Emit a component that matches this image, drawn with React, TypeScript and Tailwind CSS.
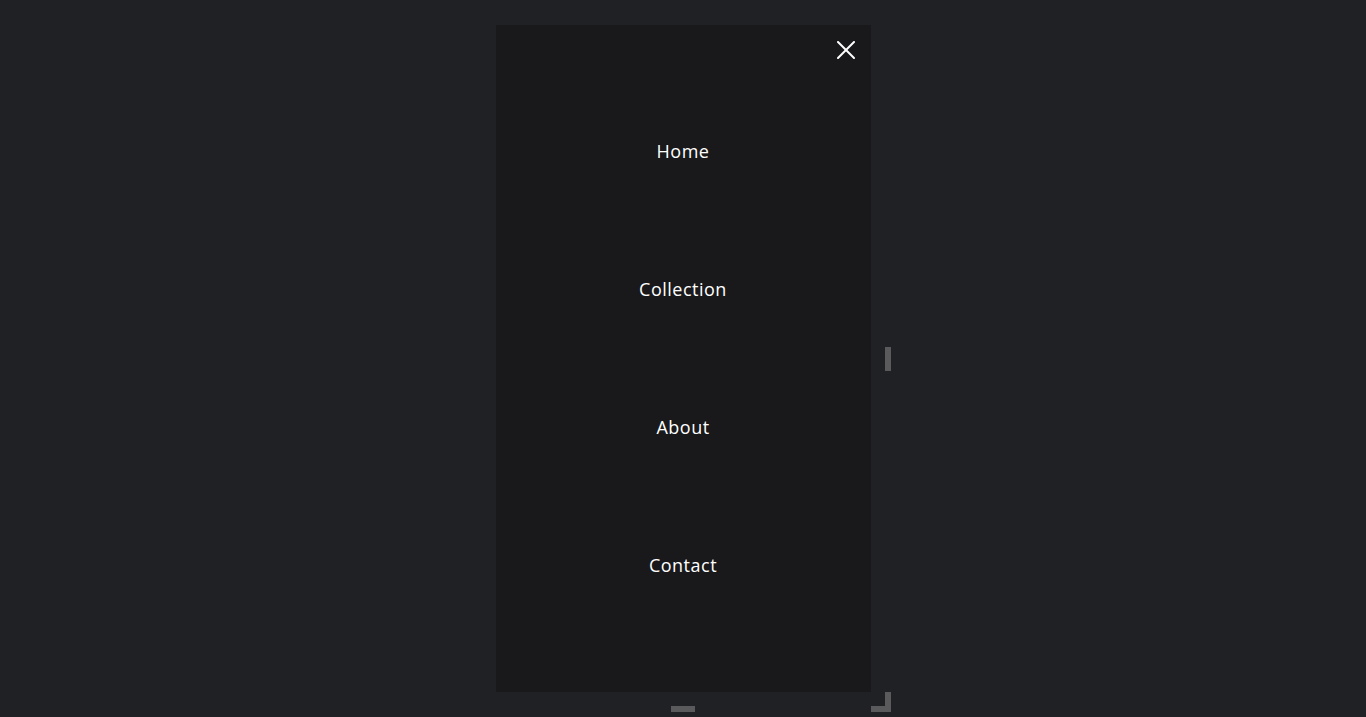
const links = ['Home', 'Collection', 'About', 'Contact'];

export default function App() {
  return (
    <div className="w-full h-[717px] bg-[#202125] overflow-hidden flex justify-center pt-[25px] font-['Open_Sans',sans-serif]">
      <div className="relative w-[375px] h-[667px]">
        <div className="w-full h-full bg-[#19191b] flex flex-col">
          {/* close */}
          <div className="flex justify-end pt-[16px] pr-[16px]">
            <button className="w-[18px] h-[18px] flex items-center justify-center text-white">
              <svg width="18" height="18" viewBox="0 0 18 18" fill="none" stroke="currentColor" strokeWidth="2" strokeLinecap="round">
                <line x1="1" y1="1" x2="17" y2="17" />
                <line x1="17" y1="1" x2="1" y2="17" />
              </svg>
            </button>
          </div>
          <nav className="flex flex-col pt-[23px]">
            {links.map((l) => (
              <a key={l} className="h-[138px] flex items-center justify-center text-[18px] text-white tracking-[0.5px]">
                {l}
              </a>
            ))}
          </nav>
        </div>
        {/* resize handles */}
        <div className="absolute left-full top-[322px] ml-[14px] w-[6px] h-[24px] bg-[#5a5a5c]" />
        <div className="absolute left-[175px] top-full mt-[14px] w-[24px] h-[6px] bg-[#5a5a5c]" />
        <div className="absolute left-full top-full ml-[14px] w-[6px] h-[20px] bg-[#5a5a5c]" />
        <div className="absolute left-full top-full mt-[14px] w-[20px] h-[6px] bg-[#5a5a5c]" />
      </div>
    </div>
  );
}
